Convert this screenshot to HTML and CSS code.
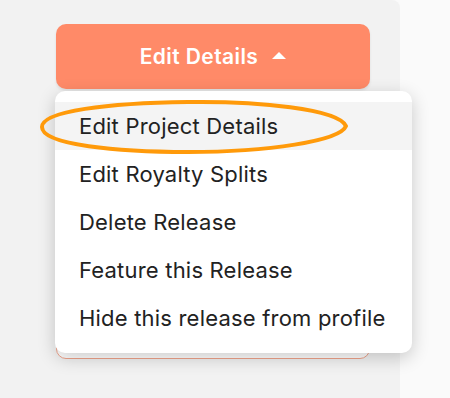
FILE: index.html
```html
<!DOCTYPE html>
<html>
<head>
  <title>Release</title>
  <link rel="stylesheet" href="styles.css">
</head>
<body>

  <div class="panel">
    <div class="actions">
      <button class="btn-edit">Edit Details <span class="caret"></span></button>
      <button class="btn-outline"></button>
    </div>

    <ul class="dropdown">
      <li class="active">Edit Project Details</li>
      <li>Edit Royalty Splits</li>
      <li>Delete Release</li>
      <li>Feature this Release</li>
      <li>Hide this release from profile</li>
    </ul>

    <!-- marker drawn round the first option -->
    <svg class="circle" width="316" height="62" viewBox="0 0 316 62">
      <path d="M 150,5 C 220,4 300,12 308,29 C 302,44 230,55 150,55 C 80,55 4,48 4,30 C 4,14 70,6 150,5 Z"
            fill="none" stroke="#ff9a0a" stroke-width="4" stroke-linejoin="round"/>
    </svg>
  </div>

</body>
</html>
```

FILE: styles.css
```css
body {
  margin: 0;
  font-family: Inter, "Noto Sans", sans-serif;
  background-color: #fafafa;
}

.panel {
  position: relative;
  width: 400px;
  height: 398px;
  background-color: #f2f2f2;
  border-top-right-radius: 8px;
}

.actions {
  display: flex;
  flex-direction: column;
  padding: 24px 0 0 56px;
  width: 314px;
}

.actions button {
  height: 65px;
  border-radius: 10px;
  font-family: inherit;
}

.btn-edit {
  background-color: #ff8a68;
  color: #ffffff;
  border: none;
  box-shadow: 0 2px 3px rgba(0, 0, 0, 0.08);
  font-size: 21px;
  font-weight: 600;
  letter-spacing: 0.4px;
  display: flex;
  align-items: center;
  justify-content: center;
  gap: 14px;
}

.caret {
  width: 0;
  height: 0;
  border-left: 7px solid transparent;
  border-right: 7px solid transparent;
  border-bottom: 7px solid #ffffff;
  margin-top: -2px;
}

.btn-outline {
  margin-top: 205px;
  background-color: #ffffff;
  border: 1px solid #f0a48c;
}

.dropdown {
  position: absolute;
  top: 91px;
  left: 55px;
  width: 357px;
  margin: 0;
  padding: 11px 0;
  list-style-type: none;
  background-color: #ffffff;
  border-radius: 10px;
  box-shadow: 0 5px 18px rgba(0, 0, 0, 0.2);
}

.dropdown li {
  height: 48px;
  line-height: 48px;
  padding-left: 24px;
  font-size: 22px;
  letter-spacing: 0.2px;
  color: #222222;
}

.dropdown li.active {
  background-color: #f4f4f4;
}

.circle {
  position: absolute;
  top: 97px;
  left: 38px;
}
```
